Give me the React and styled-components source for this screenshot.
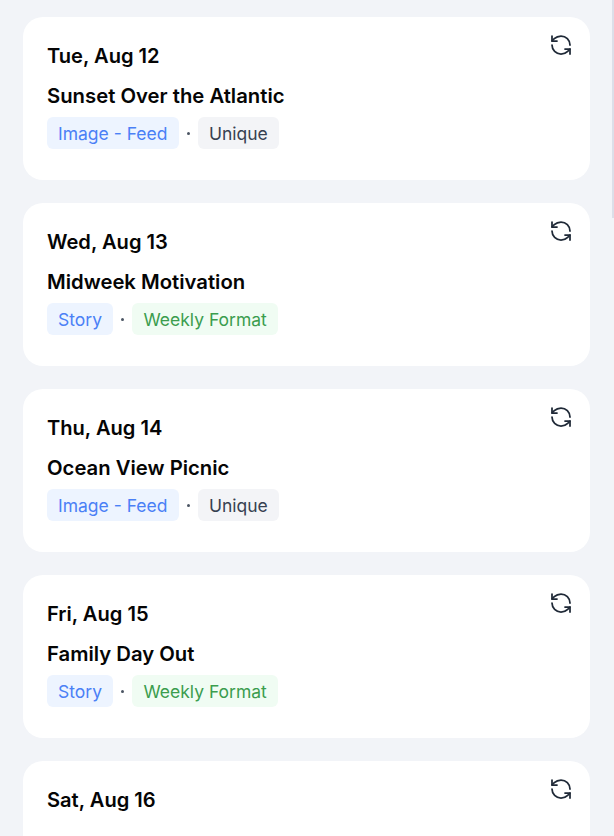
import React from 'react';
import styled, { createGlobalStyle } from 'styled-components';
import { RefreshCcw } from 'lucide-react';

const GlobalStyle = createGlobalStyle`
  html, body {
    margin: 0;
    height: 100%;
    overflow: hidden;
    background: #f2f4f8;
    font-family: Inter, "Liberation Sans", sans-serif;
  }
`;

const List = styled.div`
  display: flex;
  flex-direction: column;
  gap: 23px;
  padding: 17px 24px 0 23px;
  height: 836px;
  box-sizing: border-box;
  overflow: hidden;
`;

const ScrollThumb = styled.div`
  position: absolute;
  top: 0;
  right: 0;
  width: 2px;
  height: 218px;
  background: #dcdfe9;
`;

const Card = styled.div`
  position: relative;
  flex: none;
  height: 163px;
  box-sizing: border-box;
  padding: 26px 24px 0;
  background: #fff;
  border-radius: 20px;
`;

const DateLabel = styled.div`
  font-size: 20.1px;
  line-height: 27px;
  font-weight: 600;
  color: #050505;
`;

const Title = styled.div`
  margin-top: 12px;
  font-size: 20.3px;
  line-height: 28px;
  font-weight: 600;
  color: #050505;
`;

const Tags = styled.div`
  display: flex;
  align-items: center;
  gap: 8px;
  margin-top: 7px;
`;

const tagColors = {
  blue: ['#edf4ff', '#4a80f6'],
  gray: ['#f3f4f7', '#374151'],
  green: ['#f0fcf3', '#3b9d4e'],
};

const Tag = styled.span`
  padding: 0 11.5px 0 11px;
  height: 32px;
  line-height: 33px;
  border-radius: 6px;
  font-size: 17.5px;
  background: ${(p) => tagColors[p.$color][0]};
  color: ${(p) => tagColors[p.$color][1]};
`;

const Dot = styled.span`
  width: 3px;
  height: 3px;
  border-radius: 50%;
  background: #4b5563;
`;

const SyncButton = styled.div`
  position: absolute;
  top: 16px;
  right: 17px;
  display: flex;
  color: #1f2937;
`;

const posts = [
  { date: 'Tue, Aug 12', title: 'Sunset Over the Atlantic', type: 'Image - Feed', tag: 'Unique', color: 'gray' },
  { date: 'Wed, Aug 13', title: 'Midweek Motivation', type: 'Story', tag: 'Weekly Format', color: 'green' },
  { date: 'Thu, Aug 14', title: 'Ocean View Picnic', type: 'Image - Feed', tag: 'Unique', color: 'gray' },
  { date: 'Fri, Aug 15', title: 'Family Day Out', type: 'Story', tag: 'Weekly Format', color: 'green' },
  { date: 'Sat, Aug 16' },
];

export default function App() {
  return (
    <>
      <GlobalStyle />
      <ScrollThumb />
      <List>
        {posts.map((post) => (
          <Card key={post.date}>
            <SyncButton>
              <RefreshCcw size={24} strokeWidth={1.75} />
            </SyncButton>
            <DateLabel>{post.date}</DateLabel>
            {post.title && (
              <>
                <Title>{post.title}</Title>
                <Tags>
                  <Tag $color="blue">{post.type}</Tag>
                  <Dot />
                  <Tag $color={post.color}>{post.tag}</Tag>
                </Tags>
              </>
            )}
          </Card>
        ))}
      </List>
    </>
  );
}
